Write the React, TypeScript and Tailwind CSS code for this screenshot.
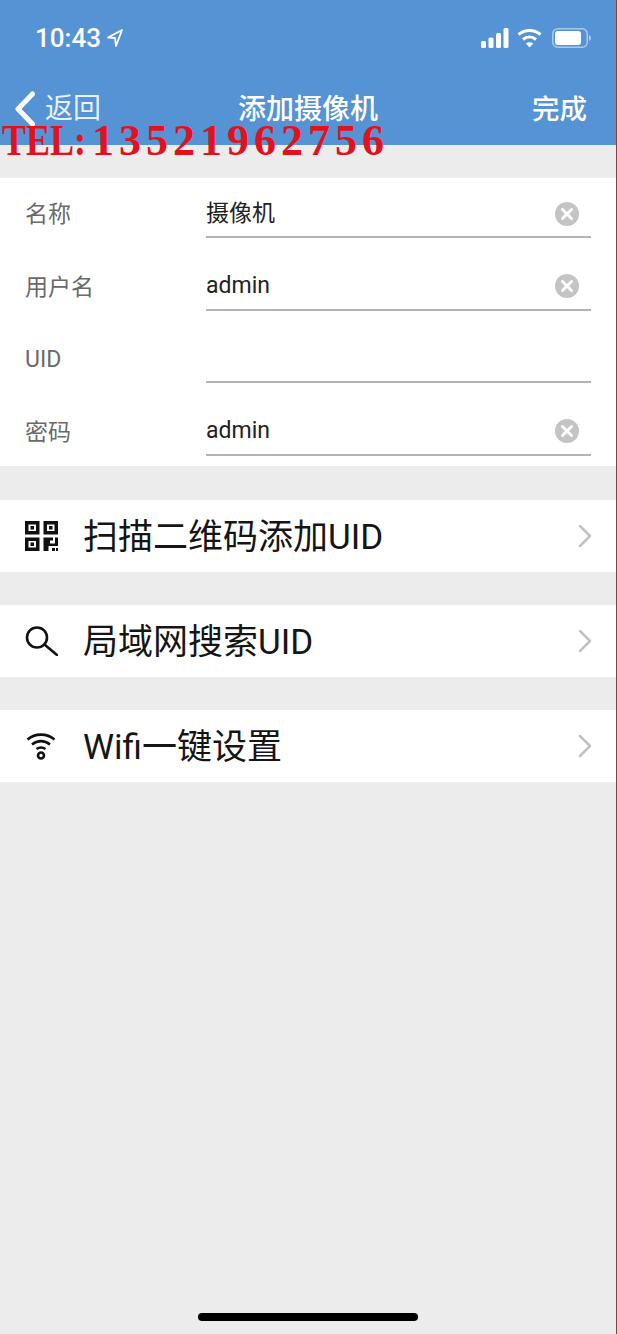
import { FC, ReactNode } from "react";

const font = "font-['Roboto','Noto_Sans_CJK_SC',sans-serif]";

const ClearIcon: FC = () => (
  <svg width="24" height="24" viewBox="0 0 24 24" className="shrink-0">
    <circle cx="12" cy="12" r="12" fill="#c4c4c4" />
    <path d="M7.500 7.500l9 9M16.500 7.500l-9 9" stroke="#fff" strokeWidth="3" strokeLinecap="round" />
  </svg>
);

const Field: FC<{ label: string; value?: string; clear?: boolean }> = ({ label, value, clear = true }) => (
  <div className="flex h-[72.5px] pl-[25px] pr-[25px]">
    <div className="w-[181px] pt-[22px] text-[23px] leading-[30px] text-[#6a6a6a]">{label}</div>
    <div className="flex h-[60px] flex-1 items-center justify-between border-b-2 border-[#b4b4b4] pr-[12px] pt-[13px]">
      <span className="text-[23px] leading-[30px] text-[#222]">{value}</span>
      {clear && <ClearIcon />}
    </div>
  </div>
);

const LinkRow: FC<{ icon: ReactNode; label: string }> = ({ icon, label }) => (
  <div className="flex h-[72px] items-center bg-white pl-[25px] pr-[24px]">
    <div className="flex w-[58px] shrink-0">{icon}</div>
    <span className="flex-1 pt-[2px] text-[35px] leading-none text-[#151515]">{label}</span>
    <svg width="14" height="24" viewBox="0 0 14 24" fill="none" stroke="#c2c2c2" strokeWidth="2.500" strokeLinecap="round" strokeLinejoin="round">
      <path d="M2 2l10 10L2 22" />
    </svg>
  </div>
);

const QrIcon: FC = () => (
  <svg width="33" height="30" viewBox="0 0 33 30" fill="#111">
    <path fillRule="evenodd" d="M0 0h14.500v13.500H0zM3.500 3.500v6.500h7.500V3.500zM18.500 0h14.500v13.500H18.500zM22 3.500v6.500h7.500V3.500zM0 16.500h14.500v13.500H0zM3.500 20v6.500h7.500V20z" />
    <rect x="5.500" y="5" width="3.500" height="3.500" />
    <rect x="24" y="5" width="3.500" height="3.500" />
    <rect x="5.500" y="21.500" width="3.500" height="3.500" />
    <path d="M18.500 16.500h9.500v3h-3v3h5v-6h3v8.500h-9.500v5h-5zM27 27h3v3h-3zM31 27h2v3h-2z" />
  </svg>
);

const SearchIcon: FC = () => (
  <svg width="33" height="30" viewBox="0 0 33 30" fill="none" stroke="#111" strokeWidth="2.600">
    <circle cx="12" cy="11.500" r="10" />
    <path d="M19.500 18.500L32 29" strokeLinecap="round" />
  </svg>
);

const WifiIcon: FC = () => (
  <svg width="30" height="28" viewBox="0 0 30 28" fill="none" stroke="#111" strokeWidth="2.600" className="ml-[1px]">
    <path d="M1.500 7.500C9 1 21 1 28.500 7.500" />
    <path d="M6 12.500C11.500 8 18.500 8 24 12.500" />
    <path d="M10.500 17C13.500 15 16.500 15 19.500 17" />
    <circle cx="15" cy="23.500" r="3" />
  </svg>
);

const StatusIcons: FC = () => (
  <div className="flex items-center gap-[8px]">
    <svg width="28" height="20" viewBox="0 0 28 20" fill="#fff">
      <rect x="0" y="13" width="5" height="7" rx="1.500" />
      <rect x="7.500" y="9.500" width="5" height="10.500" rx="1.500" />
      <rect x="15" y="5" width="5" height="15" rx="1.500" />
      <rect x="22.500" y="0" width="5" height="20" rx="1.500" />
    </svg>
    <svg width="25" height="20" viewBox="0 0 25 20" fill="none" stroke="#fff" strokeWidth="3">
      <path d="M1.500 6.500C8 1 17 1 23.500 6.500" />
      <path d="M6 11.500C10 8 15 8 19 11.500" />
      <path d="M12.500 19.500L8.800 15.500C11 13.800 14 13.800 16.200 15.500Z" fill="#fff" stroke="none" />
    </svg>
    <svg width="39" height="20" viewBox="0 0 39 20" fill="none" className="ml-[2px]">
      <rect x="0.750" y="0.750" width="34.500" height="18.500" rx="5" stroke="#a9c9ee" strokeWidth="1.500" />
      <rect x="3" y="3" width="26" height="14" rx="3" fill="#fff" />
      <path d="M37 7c1.300.5 2 1.700 2 3s-.7 2.500-2 3z" fill="#a9c9ee" />
    </svg>
  </div>
);

export default function App() {
  return (
    <div className={`relative flex h-[1334px] w-[617px] flex-col overflow-hidden border-r border-[#555] bg-[#ececec] ${font}`}>
      <header className="h-[145px] bg-[#5593d4] text-white">
        <div className="flex h-[76px] items-center justify-between pl-[35px] pr-[25px]">
          <div className="flex items-center gap-[6px]">
            <span className="text-[26px] font-medium leading-none">10:43</span>
            <svg width="16" height="18" viewBox="0 0 16 18" fill="none" stroke="#fff" strokeWidth="1.800" strokeLinejoin="round">
              <path d="M15 1L1 8.500l7 .5 1 8z" />
            </svg>
          </div>
          <StatusIcons />
        </div>
        <div className="flex h-[66px] items-center justify-between pl-[14px] pr-[29px]">
          <div className="flex w-[110px] items-center gap-[9px]">
            <svg width="22" height="36" viewBox="0 0 22 36" fill="none" stroke="#fff" strokeWidth="5" strokeLinecap="round" strokeLinejoin="round">
              <path d="M18.500 3L4 18l14.500 15" />
            </svg>
            <span className="text-[28px] leading-none text-[#e8f0fa]">返回</span>
          </div>
          <span className="pt-[1px] text-[28px] font-medium leading-none">添加摄像机</span>
          <span className="w-[95px] pt-[1px] text-right text-[27.500px] font-medium leading-none">完成</span>
        </div>
      </header>

      <div className="absolute left-[2px] top-[116px] whitespace-nowrap font-['Liberation_Serif',serif] text-[44px] font-bold leading-[50px] text-[#e3111d]">
        <span className="inline-block origin-[0_78%] scale-y-[1.22] text-[36px]">TEL:</span>
        <span className="ml-[6px] tracking-[5px]">13521962756</span>
      </div>

      <section className="mt-[33px] h-[288px] bg-white">
        <Field label="名称" value="摄像机" />
        <Field label="用户名" value="admin" />
        <Field label="UID" clear={false} />
        <Field label="密码" value="admin" />
      </section>

      <div className="mt-[34px] flex flex-col gap-[33px]">
        <LinkRow icon={<QrIcon />} label="扫描二维码添加UID" />
        <LinkRow icon={<SearchIcon />} label="局域网搜索UID" />
        <LinkRow icon={<WifiIcon />} label="Wifi一键设置" />
      </div>

      <div className="mt-auto flex justify-center pb-[13px]">
        <div className="h-[8px] w-[220px] rounded-full bg-black" />
      </div>
    </div>
  );
}
